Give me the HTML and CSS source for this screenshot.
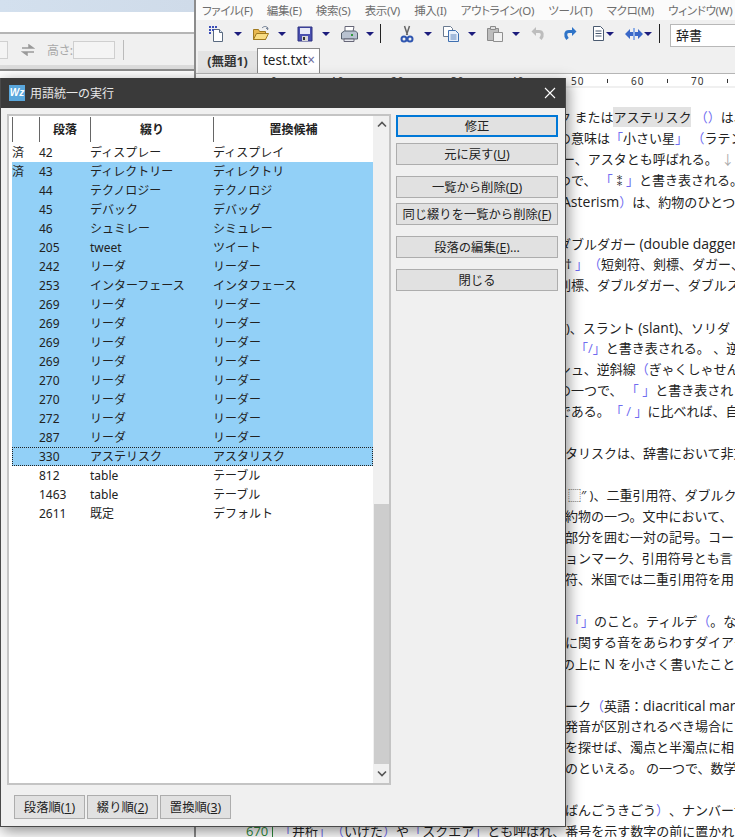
FILE: index.html
```html
<!DOCTYPE html>
<html lang="ja">
<head>
    <meta charset="UTF-8">
    <title>用語統一の実行</title>
    <link rel="stylesheet" href="styles.css">
</head>
<body>
    <div class="desktop">
        <div class="back-window">
            <div class="back-title"></div>
            <div class="back-white"></div>
            <div class="back-toolbar">
                <span class="back-input-stub"></span>
                <svg class="swap-icon" width="14" height="12" viewBox="0 0 14 12">
                    <path d="M1 4h9M8 1l4 3-4 0z" stroke="#9a9a9a" stroke-width="1.5" fill="#9a9a9a"/>
                    <path d="M13 8H4M6 11L2 8h4z" stroke="#9a9a9a" stroke-width="1.5" fill="#9a9a9a"/>
                </svg>
                <span class="back-label">高さ:</span>
                <span class="back-input"></span>
                <span class="back-sep"></span>
            </div>
            <div class="back-band"></div>
        </div>

        <div class="editor">
            <div class="menu">
                <span>ファイル(F)</span>
                <span>編集(E)</span>
                <span>検索(S)</span>
                <span>表示(V)</span>
                <span>挿入(I)</span>
                <span>アウトライン(O)</span>
                <span>ツール(T)</span>
                <span>マクロ(M)</span>
                <span>ウィンドウ(W)</span>
            </div>
            <div class="toolbar">
                <span class="tool">
                    <svg width="18" height="18" viewBox="0 0 18 18">
                        <path d="M5.500 4.500h6l3 3v9h-9z" fill="#fff" stroke="#5a6a80"/>
                        <path d="M11.500 4.500v3h3" fill="#dfe8f4" stroke="#5a6a80"/>
                        <path d="M1 1h2v2H1zM4 1h2v2H4zM7 1h2v2H7zM1 4h2v2H1zM1 7h2v2H1zM4 4h2v2H4z" fill="#3c4fb8"/>
                    </svg>
                    <i class="caret"></i>
                </span>
                <span class="tool">
                    <svg width="18" height="18" viewBox="0 0 18 18">
                        <path d="M1.500 4.500h5l1 2h6v8h-12z" fill="#e8b850" stroke="#a07a20"/>
                        <path d="M1.500 14.500l3-6h12l-3 6z" fill="#f9dd83" stroke="#a07a20"/>
                        <path d="M10 3c2-2 4-2 6 0l-2 .5M16 3l-.5 2" fill="none" stroke="#6c7a90"/>
                    </svg>
                    <i class="caret"></i>
                </span>
                <span class="tool">
                    <svg width="18" height="18" viewBox="0 0 18 18">
                        <path d="M2 2h14v14H2z" fill="#4a50b0" stroke="#2c3080"/>
                        <path d="M4 3h10v6H4z" fill="#e6e8f6"/>
                        <path d="M6 11h6v5H6z" fill="#d8d8d8"/>
                        <path d="M7 12h2v3H7z" fill="#333"/>
                    </svg>
                    <i class="caret"></i>
                </span>
                <span class="tool">
                    <svg width="18" height="18" viewBox="0 0 18 18">
                        <path d="M5 1.500h9l-1 5H5z" fill="#fff" stroke="#667"/>
                        <path d="M1.500 8l3-2h11l2 2v6H1.500z" fill="#b8c2d0" stroke="#55606e"/>
                        <path d="M4 14h10v2.500H4z" fill="#e6e8ee" stroke="#667"/>
                        <path d="M11 9h2v2h-2z" fill="#2f9a3c"/>
                    </svg>
                    <i class="caret"></i>
                </span>
                <span class="tool-sep sep-first"></span>
                <span class="tool">
                    <svg width="18" height="18" viewBox="0 0 18 18">
                        <path d="M6.500 1l3 9M11.500 1l-3 9" stroke="#666" stroke-width="1.500" fill="none"/>
                        <circle cx="6" cy="14" r="2.500" fill="none" stroke="#2f56b0" stroke-width="2"/>
                        <circle cx="12" cy="14" r="2.500" fill="none" stroke="#2f56b0" stroke-width="2"/>
                    </svg>
                    <i class="caret"></i>
                </span>
                <span class="tool">
                    <svg width="18" height="18" viewBox="0 0 18 18">
                        <path d="M1.500 1.500h7l2 2v8h-9z" fill="#fff" stroke="#6a7a90"/>
                        <path d="M6.500 5.500h7l3 3v8h-10z" fill="#e8f0fb" stroke="#3f6fb0"/>
                        <path d="M8.500 10h6M8.500 12h6M8.500 14h6" stroke="#5f86bd"/>
                    </svg>
                    <i class="caret"></i>
                </span>
                <span class="tool">
                    <svg width="18" height="18" viewBox="0 0 18 18">
                        <path d="M1.500 3.500h11v12h-11z" fill="#bdbdbd" stroke="#8a8a8a"/>
                        <path d="M4.500 1.500h5v3h-5z" fill="#e0e0e0" stroke="#8a8a8a"/>
                        <path d="M7.500 7.500h9v9h-9z" fill="#f2f2f2" stroke="#8f8f8f"/>
                    </svg>
                    <i class="caret"></i>
                </span>
                <span class="tool tool-single">
                    <svg width="16" height="16" viewBox="0 0 16 16">
                        <path d="M5 5.500h4c3.500 0 4.500 3.500 1.500 7.500" fill="none" stroke="#bdbdbd" stroke-width="3"/>
                        <path d="M6 1v9L1.500 5.500z" fill="#bdbdbd"/>
                    </svg>
                </span>
                <span class="tool tool-redo">
                    <svg width="16" height="16" viewBox="0 0 16 16">
                        <path d="M11 5.500H7c-3.500 0-4.500 3.500-1.500 7.500" fill="none" stroke="#2f74c8" stroke-width="3"/>
                        <path d="M10 1v9l4.500-4.500z" fill="#2f74c8"/>
                    </svg>
                </span>
                <span class="tool tool-doc">
                    <svg width="12" height="15" viewBox="0 0 12 15">
                        <path d="M.5.500h7l3 3v11H.500z" fill="#fff" stroke="#4a5a70"/>
                        <path d="M2.500 5h6M2.500 7.500h6M2.500 10h6" stroke="#4a5a70"/>
                    </svg>
                    <i class="caret"></i>
                </span>
                <span class="tool tool-move">
                    <svg width="18" height="14" viewBox="0 0 18 14">
                        <path d="M0 7l5-5v3h8V2l5 5-5 5V9H5v3z" fill="#3a68c8"/>
                        <path d="M8 1h2v12H8z" fill="#8fb0e8"/>
                    </svg>
                    <i class="caret"></i>
                </span>
                <span class="tool-sep sep-second"></span>
                <span class="combo">辞書</span>
            </div>
            <div class="tabs">
                <span class="tab">(無題1)</span>
                <span class="tab tab-active">test.txt<b class="tab-close">×</b></span>
            </div>
            <div class="ruler">
                <span>0</span><span>10</span><span>20</span><span>30</span><span>40</span><span>50</span><span>60</span><span>70</span>
            </div>
            <div class="text-area">
                <div class="line">ク または<mark>アステリスク</mark> <em>（）</em>は、</div>
                <div class="line">の意味は<em>「</em>小さい星<em>」</em> <em>（</em>ラテン</div>
                <div class="line line-s">ー、アスタとも呼ばれる。 <u class="down">↓</u></div>
                <div class="line">つで、 <em>「</em>⁑<em>」</em>と書き表される。</div>
                <div class="line line-s"><span class="la">Asterism</span><em>）</em>は、約物のひとつで</div>
                <div class="line"></div>
                <div class="line">ダブルダガー <span class="la">(double dagger</span></div>
                <div class="line line-s"><span class="wide-glyph">†</span><em>」（</em>短剣符、剣標、ダガー、</div>
                <div class="line">剣標、ダブルダガー、ダブルス</div>
                <div class="line"></div>
                <div class="line">n)、スラント <span class="la">(slant)</span>、ソリダ</div>
                <div class="line line-xl"><em>「/」</em>と書き表される。 、逆</div>
                <div class="line">シュ、逆斜線<em>（</em>ぎゃくしゃせん</div>
                <div class="line">の一つで、 <em>「 」</em>と書き表され</div>
                <div class="line">である。<em>「 / 」</em>に比べれば、自</div>
                <div class="line"></div>
                <div class="line line-m">タリスクは、辞書において非文</div>
                <div class="line"></div>
                <div class="line line-wide">⬚″ )、二重引用符、ダブルク</div>
                <div class="line line-m">約物の一つ。文中において、〈</div>
                <div class="line line-m">部分を囲む一対の記号。コーテ</div>
                <div class="line line-m">ョンマーク、引用符号とも言</div>
                <div class="line line-m">符、米国では二重引用符を用い</div>
                <div class="line"></div>
                <div class="line line-wide"><em>「」</em>のこと。ティルデ<em>（</em>。な</div>
                <div class="line line-m">に関する音をあらわすダイアク</div>
                <div class="line line-s">の上に <span class="la">N</span> を小さく書いたこと</div>
                <div class="line"></div>
                <div class="line line-m">ーク<em>（</em>英語：<span class="la">diacritical mark</span></div>
                <div class="line line-m">発音が区別されるべき場合に</div>
                <div class="line line-m">を探せば、濁点と半濁点に相当</div>
                <div class="line line-m">のといえる。 の一つで、数学</div>
                <div class="line"></div>
                <div class="line line-m">ばんごうきごう<em>）</em>、ナンバーサ</div>
                <div class="line line-numbered"><span class="line-no">670</span><em>「</em>井桁<em>」</em> <em>（</em>いげた<em>）</em>や<em>「</em>スクエア<em>」</em>とも呼ばれ、番号を示す数字の前に置かれ</div>
            </div>
        </div>

        <div class="dialog">
            <div class="dialog-title">
                <span class="app-icon">Wz</span>
                <span class="dialog-name">用語統一の実行</span>
                <svg class="dialog-close" width="12" height="12" viewBox="0 0 12 12">
                    <path d="M1 1l10 10M11 1L1 11" stroke="#fff" stroke-width="1.100"/>
                </svg>
            </div>
            <div class="dialog-body">
                <div class="dialog-main">
                    <div class="list">
                        <div class="list-inner">
                            <div class="row row-head">
                                <span class="c-done"></span>
                                <span class="c-para">段落</span>
                                <span class="c-word">綴り</span>
                                <span class="c-repl">置換候補</span>
                            </div>
                            <div class="row"><span class="c-done">済</span><span class="c-para">42</span><span class="c-word">ディスプレー</span><span class="c-repl">ディスプレイ</span></div>
                            <div class="row sel"><span class="c-done">済</span><span class="c-para">43</span><span class="c-word">ディレクトリー</span><span class="c-repl">ディレクトリ</span></div>
                            <div class="row sel"><span class="c-done"></span><span class="c-para">44</span><span class="c-word">テクノロジー</span><span class="c-repl">テクノロジ</span></div>
                            <div class="row sel"><span class="c-done"></span><span class="c-para">45</span><span class="c-word">デバック</span><span class="c-repl">デバッグ</span></div>
                            <div class="row sel"><span class="c-done"></span><span class="c-para">46</span><span class="c-word">シュミレー</span><span class="c-repl">シミュレー</span></div>
                            <div class="row sel"><span class="c-done"></span><span class="c-para">205</span><span class="c-word">tweet</span><span class="c-repl">ツイート</span></div>
                            <div class="row sel"><span class="c-done"></span><span class="c-para">242</span><span class="c-word">リーダ</span><span class="c-repl">リーダー</span></div>
                            <div class="row sel"><span class="c-done"></span><span class="c-para">253</span><span class="c-word">インターフェース</span><span class="c-repl">インタフェース</span></div>
                            <div class="row sel"><span class="c-done"></span><span class="c-para">269</span><span class="c-word">リーダ</span><span class="c-repl">リーダー</span></div>
                            <div class="row sel"><span class="c-done"></span><span class="c-para">269</span><span class="c-word">リーダ</span><span class="c-repl">リーダー</span></div>
                            <div class="row sel"><span class="c-done"></span><span class="c-para">269</span><span class="c-word">リーダ</span><span class="c-repl">リーダー</span></div>
                            <div class="row sel"><span class="c-done"></span><span class="c-para">269</span><span class="c-word">リーダ</span><span class="c-repl">リーダー</span></div>
                            <div class="row sel"><span class="c-done"></span><span class="c-para">270</span><span class="c-word">リーダ</span><span class="c-repl">リーダー</span></div>
                            <div class="row sel"><span class="c-done"></span><span class="c-para">270</span><span class="c-word">リーダ</span><span class="c-repl">リーダー</span></div>
                            <div class="row sel"><span class="c-done"></span><span class="c-para">272</span><span class="c-word">リーダ</span><span class="c-repl">リーダー</span></div>
                            <div class="row sel"><span class="c-done"></span><span class="c-para">287</span><span class="c-word">リーダ</span><span class="c-repl">リーダー</span></div>
                            <div class="row sel focus"><span class="c-done"></span><span class="c-para">330</span><span class="c-word">アステリスク</span><span class="c-repl">アスタリスク</span></div>
                            <div class="row"><span class="c-done"></span><span class="c-para">812</span><span class="c-word">table</span><span class="c-repl">テーブル</span></div>
                            <div class="row"><span class="c-done"></span><span class="c-para">1463</span><span class="c-word">table</span><span class="c-repl">テーブル</span></div>
                            <div class="row"><span class="c-done"></span><span class="c-para">2611</span><span class="c-word">既定</span><span class="c-repl">デフォルト</span></div>
                        </div>
                        <div class="scrollbar">
                            <svg class="scroll-arrow" width="10" height="7" viewBox="0 0 10 7">
                                <path d="M1 5.500l4-4 4 4" fill="none" stroke="#555" stroke-width="1.600"/>
                            </svg>
                            <div class="scroll-track"><div class="scroll-thumb"></div></div>
                            <svg class="scroll-arrow" width="10" height="7" viewBox="0 0 10 7">
                                <path d="M1 1.500l4 4 4-4" fill="none" stroke="#555" stroke-width="1.600"/>
                            </svg>
                        </div>
                    </div>
                    <div class="actions">
                        <button class="btn btn-default">修正</button>
                        <button class="btn gap-s">元に戻す(<u>U</u>)</button>
                        <button class="btn gap-m">一覧から削除(<u>D</u>)</button>
                        <button class="btn gap-s2">同じ綴りを一覧から削除(<u>F</u>)</button>
                        <button class="btn gap-m">段落の編集(<u>E</u>)...</button>
                        <button class="btn gap-m">閉じる</button>
                    </div>
                </div>
                <div class="sort-buttons">
                    <button class="btn">段落順(<u>1</u>)</button>
                    <button class="btn">綴り順(<u>2</u>)</button>
                    <button class="btn">置換順(<u>3</u>)</button>
                </div>
            </div>
        </div>
    </div>
</body>
</html>
```

FILE: styles.css
```css
* {
    box-sizing: border-box;
}

html, body {
    margin: 0;
    height: 100%;
    overflow: hidden;
}

body {
    font-family: "Noto Sans", "Noto Sans CJK JP", sans-serif;
    font-size: 12px;
    color: #222;
    background-color: #fff;
}

.desktop {
    position: relative;
    display: flex;
    width: 735px;
    height: 837px;
    overflow: hidden;
}

/* window behind, on the left */
.back-window {
    width: 196px;
    border-right: 2px solid #8c8c8c;
    background-color: #fff;
}

.back-title {
    height: 12px;
    background: linear-gradient(90deg, #d3e0ee, #cfdbe9);
}

.back-white {
    height: 20px;
}

.back-toolbar {
    display: flex;
    align-items: center;
    height: 33px;
    border-top: 2px solid #b5b5b5;
    background-color: #f0f0f0;
}

.back-input-stub {
    width: 8px;
    height: 18px;
    border: 1px solid #d0d0d0;
    border-left: none;
    background-color: #f4f4f4;
}

.swap-icon {
    margin-left: 13px;
}

.back-label {
    width: 26px;
    margin-left: 12px;
    font-feature-settings: "palt";
    color: #a8a8a8;
    white-space: nowrap;
}

.back-input {
    width: 42px;
    height: 18px;
    border: 1px solid #cfcfcf;
    background-color: #f4f4f4;
}

.back-sep {
    width: 1px;
    height: 20px;
    margin-left: 8px;
    background-color: #bbb;
}

.back-band {
    height: 6px;
    border-bottom: 2px solid #8c8c8c;
    background-color: #dcdcdc;
}

/* editor window */
.editor {
    flex: 1;
    min-width: 0;
    background-color: #fff;
}

.menu {
    display: flex;
    gap: 14.2px;
    height: 20px;
    padding-left: 6px;
    align-items: center;
    font-size: 11.5px;
    letter-spacing: -0.3px;
    font-feature-settings: "palt";
    color: #6e6e6e;
    background-color: #fbfbfb;
    white-space: nowrap;
}

.toolbar {
    display: flex;
    align-items: center;
    height: 27px;
    padding-left: 12px;
    background-color: #f0f0f0;
}

.tool {
    display: flex;
    align-items: center;
    width: 44px;
    flex: none;
}

.tool svg {
    flex: none;
}

.tool-single {
    width: 32px;
}

.tool-redo {
    width: 31px;
}

.tool-doc {
    width: 32px;
}

.tool-move {
    width: 27px;
}

.caret {
    width: 0;
    height: 0;
    margin-left: 8px;
    border-top: 4px solid #1c1c7c;
    border-left: 4px solid transparent;
    border-right: 4px solid transparent;
}

.tool-doc .caret,
.tool-move .caret {
    margin-left: 1px;
}

.tool-sep {
    width: 1px;
    height: 19px;
    flex: none;
    background-color: #222;
}

.sep-first {
    margin: 0 17px 0 -4px;
}

.sep-second {
    margin: 0 10px 0 7px;
}

.combo {
    flex: 1;
    height: 23px;
    margin-top: 3px;
    padding-left: 5px;
    line-height: 20px;
    font-size: 13px;
    border: 1px solid #b8b8b8;
    border-right: none;
    background-color: #fff;
}

.tabs {
    display: flex;
    align-items: flex-end;
    height: 27px;
    padding-left: 2px;
    border-bottom: 1px solid #b5b5b5;
    background-color: #f0f0f0;
}

.tab {
    height: 22px;
    width: 59px;
    text-align: center;
    line-height: 22px;
    font-weight: bold;
    font-size: 12.5px;
    color: #333;
    background-color: #e3e3e3;
}

.tab-active {
    width: 63px;
    height: 25px;
    padding-left: 1px;
    line-height: 23px;
    font-size: 13.5px;
    font-weight: normal;
    color: #222;
    border: 1px solid #8a8a8a;
    border-bottom: none;
    background-color: #fff;
    white-space: nowrap;
}

.tab-close {
    font-weight: normal;
    color: #6c6c9c;
}

.ruler {
    display: flex;
    height: 12px;
    margin-top: 2px;
    margin-bottom: 1px;
    padding-left: 75px;
    font-size: 10px;
    line-height: 10px;
    color: #333;
    background-color: #fff;
    border-bottom: 2px solid #f0f0f0;
}

.ruler span {
    position: relative;
    width: 60px;
    flex: none;
    letter-spacing: 1px;
}

.ruler span::after {
    content: "";
    position: absolute;
    left: 36px;
    top: 3px;
    width: 1px;
    height: 4px;
    background-color: #333;
}

.text-area {
    padding-top: 18px;
    font-family: "Open Sans", "Noto Sans CJK JP", sans-serif;
    font-size: 13px;
    line-height: 21px;
    text-spacing-trim: space-all;
    white-space: nowrap;
    overflow: hidden;
}

.line {
    height: 21px;
    padding-left: 362px;
}

.line-s {
    padding-left: 366px;
}

.line-m {
    padding-left: 369px;
}

.line-wide {
    padding-left: 372px;
}

.line-xl {
    padding-left: 379px;
}

.la {
    font-size: 14px;
}

.line em {
    font-style: normal;
    color: #6f6cf0;
}

.line mark {
    display: inline-block;
    height: 20px;
    line-height: 20px;
    color: inherit;
    background-color: #e2e2e2;
}

.wide-glyph {
    display: inline-block;
    width: 13px;
    text-align: center;
}

.down {
    text-decoration: none;
    color: #aaa;
}

.line-numbered {
    display: flex;
    padding-left: 50px;
    white-space: pre;
}

.line-no {
    width: 27px;
    margin-right: 6px;
    color: #2f8a3c;
    border-right: 1px solid #2f8a3c;
}

/* dialog */
.dialog {
    position: absolute;
    left: 0;
    top: 78px;
    display: flex;
    flex-direction: column;
    width: 566px;
    height: 749px;
    border: 1px solid #4a4a4a;
    border-top: none;
    background-color: #f0f0f0;
    box-shadow: 2px 4px 14px rgba(0, 0, 0, 0.45);
}

.dialog-title {
    display: flex;
    align-items: center;
    height: 31px;
    padding-left: 8px;
    color: #e8e8e8;
    font-size: 12px;
    background-color: #3a3a3a;
}

.app-icon {
    width: 16px;
    height: 16px;
    font-family: "Liberation Sans", sans-serif;
    font-size: 10px;
    font-weight: bold;
    font-style: italic;
    line-height: 16px;
    text-align: center;
    color: #fff;
    background-color: #5aa7dc;
}

.dialog-name {
    margin-left: 5px;
}

.dialog-close {
    margin-left: auto;
    margin-right: 9px;
}

.dialog-body {
    flex: 1;
    display: flex;
    flex-direction: column;
    padding: 6px 7px 7px 6px;
}

.dialog-main {
    display: flex;
}

.list {
    display: flex;
    width: 384px;
    height: 671px;
    padding-left: 3px;
    border: 2px solid #c4c4c4;
    background-color: #fff;
}

.list-inner {
    width: 361px;
    flex: none;
}

.row {
    display: flex;
    height: 19px;
    line-height: 20px;
    white-space: nowrap;
}

.row-head {
    height: 27px;
    font-weight: bold;
    text-align: center;
}

.row-head span {
    height: 25px;
    margin-top: 1px;
    line-height: 26px;
    border-left: 1px solid #666;
}

.c-done {
    width: 27px;
    flex: none;
}

.c-para {
    width: 51px;
    flex: none;
}

.c-word {
    width: 123px;
    flex: none;
}

.c-repl {
    flex: 1;
}

.sel {
    background-color: #92d0f7;
}

.focus {
    outline: 1px dotted #222;
    outline-offset: -1px;
}

.scrollbar {
    flex: 1;
    display: flex;
    flex-direction: column;
    align-items: center;
    padding: 5px 0 6px 1px;
    background-color: #f0f0f0;
}

.scroll-track {
    flex: 1;
    width: 100%;
    padding-top: 376px;
    padding-bottom: 6px;
}

.scroll-thumb {
    height: 100%;
    background-color: #cdcdcd;
}

.actions {
    display: flex;
    flex-direction: column;
    width: 162px;
    margin-top: 1px;
    margin-left: 5px;
}

.btn {
    height: 22px;
    padding: 1px 0 0;
    font-family: inherit;
    font-size: 12.3px;
    line-height: 18px;
    color: #222;
    border: 1px solid #adadad;
    background-color: #e1e1e1;
}

.btn-default {
    border: 2px solid #0078d7;
}

.gap-s {
    margin-top: 6px;
}

.gap-s2 {
    margin-top: 5px;
}

.gap-m {
    margin-top: 11px;
}

.sort-buttons {
    display: flex;
    gap: 2px;
    margin-top: 10px;
    padding-left: 7px;
}

.sort-buttons .btn {
    width: 71px;
    height: 24px;
}
```
